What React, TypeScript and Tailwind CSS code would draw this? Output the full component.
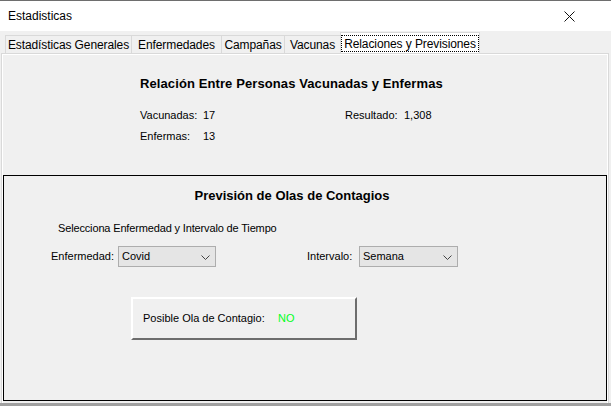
import React from "react";

const tabs = [
  { label: "Estadísticas Generales", w: "w-[126px]" },
  { label: "Enfermedades", w: "w-[90px]" },
  { label: "Campañas", w: "w-[63px]" },
  { label: "Vacunas", w: "w-[56px]" },
];

function Combo({ value, width }: { value: string; width: string }) {
  return (
    <div
      className={`${width} h-[21px] border border-[#adadad] bg-[#e5e5e5] flex items-center justify-between pl-[3px] pr-[5px]`}
    >
      <span>{value}</span>
      <svg width="9" height="6" viewBox="0 0 9 6" className="mt-[2px]">
        <path d="M0.5 0.5 L4.5 4.5 L8.5 0.5" fill="none" stroke="#444" strokeWidth="1" />
      </svg>
    </div>
  );
}

export default function App() {
  return (
    <div
      className="w-[611px] h-[406px] overflow-hidden bg-[#f0f0f0] text-[12px] text-black flex flex-col"
      style={{ fontFamily: "'Liberation Sans', Arial, sans-serif" }}
    >
      {/* title bar */}
      <div className="h-[31px] shrink-0 bg-white border-t border-[#6e6e6e] flex items-center justify-between pl-[8px] pr-[36px]">
        <span className="text-[12px] text-[#000]">Estadisticas</span>
        <svg width="11" height="11" viewBox="0 0 11 11">
          <path d="M0.5 0.5 L10.5 10.5 M10.5 0.5 L0.5 10.5" stroke="#111" strokeWidth="1" />
        </svg>
      </div>

      {/* tab strip */}
      <div className="h-[22px] shrink-0 flex items-end pl-[5px] mt-[1px]">
        {tabs.map((t) => (
          <div
            key={t.label}
            className={`${t.w} h-[19px] flex items-center justify-center border-t border-l border-[#d9d9d9] bg-[#f0f0f0] text-[12px] tracking-[-0.1px] leading-none whitespace-nowrap`}
          >
            {t.label}
          </div>
        ))}
        <div className="w-[140px] h-[22px] flex items-center justify-center bg-white border-t border-l border-r border-[#d9d9d9] text-[12px] tracking-[-0.1px] leading-none whitespace-nowrap">
          <span className="border border-dotted border-black px-[2px] h-[17px] flex items-center">
            Relaciones y Previsiones
          </span>
        </div>
      </div>

      {/* tab page */}
      <div className="flex-1 mx-[2px] mr-[3px] border-t border-l border-r border-[#ffffff] outline outline-1 outline-[#d9d9d9] flex flex-col">
        <div className="h-[120px] shrink-0 flex flex-col pl-[137px]">
          <div className="mt-[19px] text-[13px] font-bold tracking-[0.1px]">
            Relación Entre Personas Vacunadas y Enfermas
          </div>
          <div className="mt-[13px] flex text-[11px]">
            <div className="w-[205px] flex">
              <span className="w-[63px]">Vacunadas:</span>
              <span>17</span>
            </div>
            <div className="flex">
              <span className="w-[59px]">Resultado:</span>
              <span>1,308</span>
            </div>
          </div>
          <div className="mt-[5px] flex text-[11px]">
            <span className="w-[63px]">Enfermas:</span>
            <span>13</span>
          </div>
        </div>

        <div className="h-[226px] shrink-0 border border-black flex flex-col text-[11px]">
          <div className="mt-[10px] text-center pr-[26px] text-[13px] font-bold">
            Previsión de Olas de Contagios
          </div>
          <div className="mt-[14px] pl-[54px] tracking-[-0.15px]">Selecciona Enfermedad y Intervalo de Tiempo</div>
          <div className="mt-[10px] flex items-center pl-[47px]">
            <span className="w-[67px]">Enfermedad:</span>
            <Combo value="Covid" width="w-[98px]" />
            <span className="ml-[91px] w-[52px]">Intervalo:</span>
            <Combo value="Semana" width="w-[99px]" />
          </div>
          <div className="mt-[30px] ml-[127px] w-[226px] h-[43px] border-t-2 border-l-2 border-t-white border-l-white border-b-2 border-r-2 border-b-[#6d6d6d] border-r-[#6d6d6d] flex items-center pl-[10px]">
            <span className="w-[135px]">Posible Ola de Contagio:</span>
            <span className="text-[#00ff20]">NO</span>
          </div>
        </div>
      </div>
      <div className="h-[3px] shrink-0 bg-[#a0a0a0]" />
    </div>
  );
}
